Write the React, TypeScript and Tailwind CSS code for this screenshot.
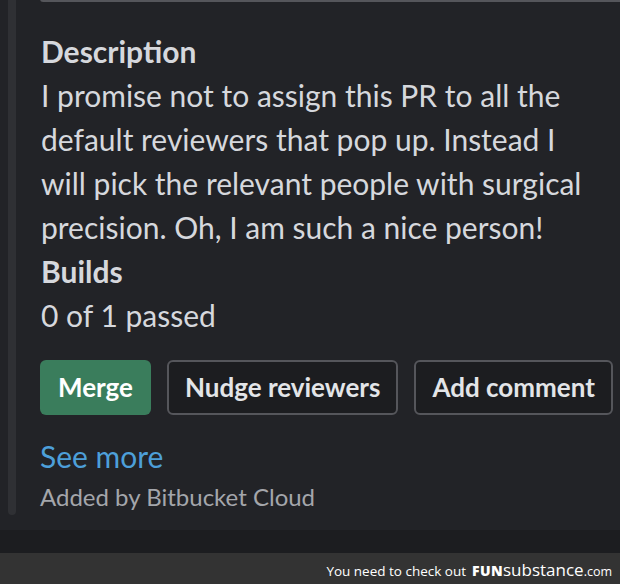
export default function App() {
  return (
    <div className="w-[620px] h-[584px] flex flex-col bg-[#222327] overflow-hidden font-['Lato',sans-serif]">
      <div className="flex-1 flex">
        <div className="ml-2 w-2 mb-[15px] rounded-b-full bg-[#2f3034]" />
        <div className="flex-1 flex flex-col pl-6">
          <div className="h-[3px] rounded-bl-lg border-l-2 border-b-2 border-[#55565b] -mt-px" />
          <div className="pl-px w-[552px] text-[#d6d8dd] text-[30px] leading-[44px] mt-[27px]">
            <div className="font-bold">Description</div>
            <p>
              I promise not to assign this PR to all the default reviewers that pop up. Instead I will pick the relevant people with surgical precision. Oh, I am such a nice person!
            </p>
            <div className="font-bold">Builds</div>
            <div>0 of 1 passed</div>
          </div>
          <div className="flex mt-[23px] text-[26px] font-bold">
            <button className="h-[55px] px-[18px] rounded-md bg-[#3a7d5c] text-white">Merge</button>
            <button className="ml-4 h-[55px] px-[16px] rounded-md border-2 border-[#55565b] bg-[#1c1d20] text-[#e3e5e8]">Nudge reviewers</button>
            <button className="ml-[16px] h-[55px] px-[16px] rounded-md border-2 border-[#55565b] bg-[#1c1d20] text-[#e3e5e8]">Add comment</button>
          </div>
          <div className="mt-[21px] text-[30px] leading-[40px] text-[#4d9fd9]">See more</div>
          <div className="mt-[3px] text-[24px] leading-[36px] text-[#a4a6ab]">Added by Bitbucket Cloud</div>
        </div>
      </div>
      <div className="h-[23px] bg-[#1c1d20]" />
      <div className="h-[31px] bg-[#333333] flex items-baseline justify-end pt-[4px] pr-[8px] font-['Open_Sans',sans-serif] text-white">
        <span className="text-[13.5px]">You need to check out</span>
        <span className="ml-[6px] text-[14px] font-extrabold tracking-wide">FUN</span>
        <span className="text-[17px]">substance</span>
        <span className="text-[12.5px]">.com</span>
      </div>
    </div>
  );
}
